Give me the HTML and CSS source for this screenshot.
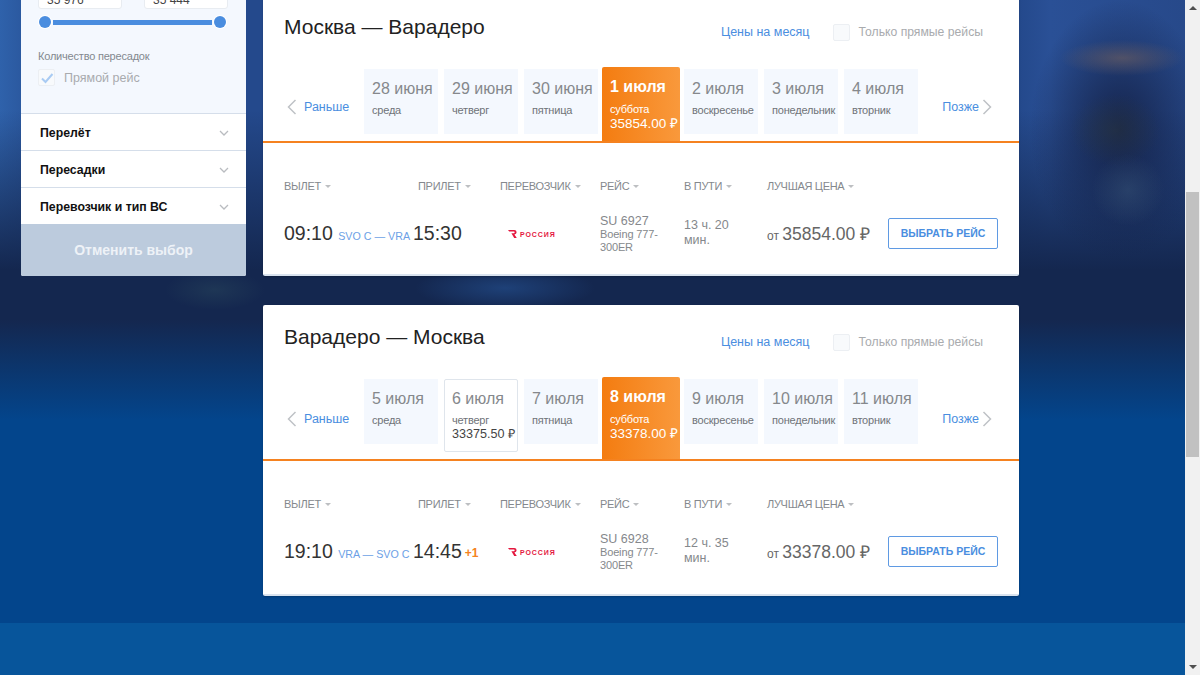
FILE: index.html
```html
<!DOCTYPE html>
<html lang="en">

<head>
    <meta charset="utf-8" />
    <title>Москва — Варадеро</title>
    <link rel="stylesheet" href="styles.css">
</head>

<body>
    <div class="page">
        <div class="content">
            <div class="layout">
                <aside class="sidebar">
                    <div class="filter">
                        <div class="range-inputs">
                            <div class="range-input">35 976</div>
                            <div class="range-input">35 444</div>
                        </div>
                        <div class="slider">
                            <span class="slider-handle"></span>
                            <span class="slider-line"></span>
                            <span class="slider-handle"></span>
                        </div>
                        <div class="filter-label">Количество пересадок</div>
                        <div class="check-row">
                            <span class="checkbox">
                                <svg width="14" height="12" viewBox="0 0 14 12"><path d="M2 6.5 L5.5 10 L12.5 2" fill="none" stroke="#a9cbf3" stroke-width="2"/></svg>
                            </span>
                            <span class="check-text">Прямой рейс</span>
                        </div>
                    </div>
                    <div class="accordion-row">Перелёт
                        <svg width="10" height="6" viewBox="0 0 10 6"><path d="M1 1 L5 5 L9 1" fill="none" stroke="#b9bcc0" stroke-width="1.3"/></svg>
                    </div>
                    <div class="accordion-row">Пересадки
                        <svg width="10" height="6" viewBox="0 0 10 6"><path d="M1 1 L5 5 L9 1" fill="none" stroke="#b9bcc0" stroke-width="1.3"/></svg>
                    </div>
                    <div class="accordion-row">Перевозчик и тип ВС
                        <svg width="10" height="6" viewBox="0 0 10 6"><path d="M1 1 L5 5 L9 1" fill="none" stroke="#b9bcc0" stroke-width="1.3"/></svg>
                    </div>
                    <div class="cancel-btn">Отменить выбор</div>
                </aside>

                <main class="results">
                    <section class="card">
                        <div class="card-head">
                            <h2 class="route-title">Москва — Варадеро</h2>
                            <a class="month-link">Цены на месяц</a>
                            <span class="checkbox"></span>
                            <span class="check-text small">Только прямые рейсы</span>
                        </div>
                        <div class="days">
                            <a class="day-nav">
                                <svg width="10" height="16" viewBox="0 0 10 16"><path d="M8.5 1 L1.5 8 L8.5 15" fill="none" stroke="#bfc2c6" stroke-width="1.5"/></svg>
                                Раньше
                            </a>
                            <div class="day"><div class="day-date">28 июня</div><div class="day-name">среда</div></div>
                            <div class="day"><div class="day-date">29 июня</div><div class="day-name">четверг</div></div>
                            <div class="day"><div class="day-date">30 июня</div><div class="day-name">пятница</div></div>
                            <div class="day active"><div class="day-date">1 июля</div><div class="day-name">суббота</div><div class="day-price">35854.00 ₽</div></div>
                            <div class="day"><div class="day-date">2 июля</div><div class="day-name">воскресенье</div></div>
                            <div class="day"><div class="day-date">3 июля</div><div class="day-name">понедельник</div></div>
                            <div class="day"><div class="day-date">4 июля</div><div class="day-name">вторник</div></div>
                            <a class="day-nav later">
                                Позже
                                <svg width="10" height="16" viewBox="0 0 10 16"><path d="M1.5 1 L8.5 8 L1.5 15" fill="none" stroke="#bfc2c6" stroke-width="1.5"/></svg>
                            </a>
                        </div>
                        <div class="table-head">
                            <span class="sort">Вылет</span>
                            <span class="sort">Прилет</span>
                            <span class="sort">Перевозчик</span>
                            <span class="sort">Рейс</span>
                            <span class="sort">В пути</span>
                            <span class="sort">Лучшая цена</span>
                        </div>
                        <div class="flight">
                            <div class="flight-time">09:10 <span class="flight-route">SVO C — VRA</span></div>
                            <div class="flight-time">15:30</div>
                            <div class="carrier">
                                <svg width="9" height="8" viewBox="0 0 9 8"><path d="M0 0 H6.2 Q8.6 0 8.6 2.2 Q8.6 4 6.4 4.4 L8.8 8 H6.2 L3.4 3.2 H6 Q6.6 3.2 6.6 2.3 Q6.6 1.5 6 1.5 H1.2 Z" fill="#e4173e"/></svg>
                                <span class="carrier-name">РОССИЯ</span>
                            </div>
                            <div class="flight-info"><div class="flight-no">SU 6927</div>Boeing 777-300ER</div>
                            <div class="flight-duration">13 ч. 20 мин.</div>
                            <div class="flight-price">от <b>35854.00 ₽</b></div>
                            <a class="select-btn">Выбрать рейс</a>
                        </div>
                    </section>

                    <section class="card">
                        <div class="card-head">
                            <h2 class="route-title">Варадеро — Москва</h2>
                            <a class="month-link">Цены на месяц</a>
                            <span class="checkbox"></span>
                            <span class="check-text small">Только прямые рейсы</span>
                        </div>
                        <div class="days">
                            <a class="day-nav">
                                <svg width="10" height="16" viewBox="0 0 10 16"><path d="M8.5 1 L1.5 8 L8.5 15" fill="none" stroke="#bfc2c6" stroke-width="1.5"/></svg>
                                Раньше
                            </a>
                            <div class="day"><div class="day-date">5 июля</div><div class="day-name">среда</div></div>
                            <div class="day priced"><div class="day-date">6 июля</div><div class="day-name">четверг</div><div class="day-price">33375.50 ₽</div></div>
                            <div class="day"><div class="day-date">7 июля</div><div class="day-name">пятница</div></div>
                            <div class="day active"><div class="day-date">8 июля</div><div class="day-name">суббота</div><div class="day-price">33378.00 ₽</div></div>
                            <div class="day"><div class="day-date">9 июля</div><div class="day-name">воскресенье</div></div>
                            <div class="day"><div class="day-date">10 июля</div><div class="day-name">понедельник</div></div>
                            <div class="day"><div class="day-date">11 июля</div><div class="day-name">вторник</div></div>
                            <a class="day-nav later">
                                Позже
                                <svg width="10" height="16" viewBox="0 0 10 16"><path d="M1.5 1 L8.5 8 L1.5 15" fill="none" stroke="#bfc2c6" stroke-width="1.5"/></svg>
                            </a>
                        </div>
                        <div class="table-head">
                            <span class="sort">Вылет</span>
                            <span class="sort">Прилет</span>
                            <span class="sort">Перевозчик</span>
                            <span class="sort">Рейс</span>
                            <span class="sort">В пути</span>
                            <span class="sort">Лучшая цена</span>
                        </div>
                        <div class="flight">
                            <div class="flight-time">19:10 <span class="flight-route">VRA — SVO C</span></div>
                            <div class="flight-time">14:45<sup class="next-day">+1</sup></div>
                            <div class="carrier">
                                <svg width="9" height="8" viewBox="0 0 9 8"><path d="M0 0 H6.2 Q8.6 0 8.6 2.2 Q8.6 4 6.4 4.4 L8.8 8 H6.2 L3.4 3.2 H6 Q6.6 3.2 6.6 2.3 Q6.6 1.5 6 1.5 H1.2 Z" fill="#e4173e"/></svg>
                                <span class="carrier-name">РОССИЯ</span>
                            </div>
                            <div class="flight-info"><div class="flight-no">SU 6928</div>Boeing 777-300ER</div>
                            <div class="flight-duration">12 ч. 35 мин.</div>
                            <div class="flight-price">от <b>33378.00 ₽</b></div>
                            <a class="select-btn">Выбрать рейс</a>
                        </div>
                    </section>
                </main>
            </div>
        </div>
        <div class="footer"></div>
    </div>

    <div class="scrollbar">
        <span class="scroll-up"></span>
        <div class="scroll-track"><div class="scroll-thumb"></div></div>
        <span class="scroll-down"></span>
    </div>
</body>

</html>
```
FILE: styles.css
```css
* {
    box-sizing: border-box;
    font-family: "Liberation Sans", Arial, sans-serif;
}

html, body {
    margin: 0;
    height: 675px;
    overflow: hidden;
}

body {
    display: flex;
}

.page {
    flex: 1;
    display: flex;
    flex-direction: column;
    height: 675px;
    overflow: hidden;
}

.content {
    height: 623px;
    background:
        radial-gradient(ellipse 62px 18px at 1122px 58px, rgba(120, 100, 96, .55), transparent),
        radial-gradient(ellipse 45px 36px at 1115px 130px, rgba(50, 62, 62, .4), transparent),
        radial-gradient(ellipse 36px 36px at 1128px 190px, rgba(62, 92, 125, .4), transparent),
        radial-gradient(ellipse 90px 22px at 505px 288px, rgba(40, 90, 160, .5), transparent),
        radial-gradient(ellipse 50px 20px at 215px 290px, rgba(60, 100, 105, .25), transparent),
        linear-gradient(to bottom, transparent 320px, #03458c 420px),
        radial-gradient(ellipse 90px 130px at 1120px 130px, #15234a, transparent),
        linear-gradient(to bottom, transparent 110px, #14274f 270px),
        linear-gradient(to right, #2f62ab 0, #24498c 60px, #24498c 1020px, #2a5096 1050px, #27498a 1185px);
}

.layout {
    display: flex;
    align-items: flex-start;
    gap: 17px;
    padding-left: 21px;
    margin-top: -20px;
}

/* left filter column */
.sidebar {
    width: 225px;
    flex: none;
    background: #fff;
    border-radius: 0 0 2px 2px;
    overflow: hidden;
}

.filter {
    height: 133px;
    padding: 0 18px 0 17px;
    background: #f4f8fe;
}

.range-inputs {
    display: flex;
    justify-content: space-between;
}

.range-input {
    width: 84px;
    height: 29px;
    padding: 13px 0 0 8px;
    font-size: 12px;
    line-height: 12px;
    color: #444;
    background: #fff;
    border: 1px solid #e8ecf1;
    border-radius: 3px;
}

.slider {
    display: flex;
    align-items: center;
    gap: 1px;
    margin: 7px 2px 0 1px;
}

.slider-handle {
    width: 12px;
    height: 12px;
    border-radius: 50%;
    background: #4a8ddf;
    box-shadow: 0 0 0 1px #fff;
}

.slider-line {
    flex: 1;
    height: 5px;
    margin: 0 1px;
    background: #4a8ddf;
}

.filter-label {
    margin-top: 21px;
    font-size: 11px;
    letter-spacing: -.2px;
    line-height: 14px;
    color: #83888f;
}

.check-row {
    display: flex;
    align-items: center;
    gap: 9px;
    margin-top: 6px;
}

.checkbox {
    display: inline-flex;
    align-items: center;
    justify-content: center;
    width: 17px;
    height: 17px;
    flex: none;
    background: #f8fafc;
    border: 1px solid #eceff3;
    border-radius: 2px;
}

.check-text {
    font-size: 12.5px;
    color: #a9abae;
}

.check-text.small {
    font-size: 12.2px;
}

.accordion-row {
    display: flex;
    align-items: center;
    justify-content: space-between;
    height: 37px;
    padding: 2px 17px 0 19px;
    font-size: 12.3px;
    font-weight: bold;
    color: #111;
    background: #fff;
    border-top: 1px solid #d5deea;
}

.cancel-btn {
    height: 52px;
    font-size: 14px;
    font-weight: bold;
    line-height: 52px;
    text-align: center;
    color: #eef2f7;
    background: #bccbdd;
}

/* right column */
.results {
    display: flex;
    flex-direction: column;
    gap: 29px;
    width: 756px;
    margin-top: 15px;
}

.card {
    background: #fff;
    border-bottom: 2px solid #d9e3ef;
    border-radius: 2px;
    box-shadow: 0 1px 2px rgba(0, 0, 0, .2);
}

.card-head {
    display: flex;
    align-items: center;
    height: 74px;
    padding: 0 36px 0 21px;
}

.route-title {
    margin: 0 auto 0 0;
    font-size: 21px;
    font-weight: normal;
    color: #222;
    position: relative;
    top: -5px;
}

.month-link {
    margin-right: 23px;
    font-size: 12.5px;
    color: #4a8ee0;
}

.card-head .checkbox {
    margin-right: 9px;
}

.days {
    display: flex;
    align-items: flex-start;
    gap: 6px;
    padding: 0 21px 7px;
    border-bottom: 2px solid #f58220;
}

.day-nav {
    display: flex;
    align-items: center;
    gap: 7px;
    width: 74px;
    height: 16px;
    margin-top: 30px;
    padding-left: 3px;
    font-size: 12.5px;
    color: #4a8ee0;
}

.card + .card .day-nav {
    margin-top: 32px;
}

.day-nav.later {
    width: auto;
    margin-left: auto;
    padding: 0 6px 0 0;
    gap: 3px;
}

.day {
    width: 74px;
    min-height: 65px;
    padding: 10px 0 10px 8px;
    background: #f4f8fe;
    white-space: nowrap;
}

.day-date {
    font-size: 16px;
    line-height: 20px;
    color: #85888c;
}

.day-name {
    margin-top: 4px;
    font-size: 11px;
    letter-spacing: -.2px;
    line-height: 14px;
    color: #6f7378;
}

.day-price {
    font-size: 12.6px;
    line-height: 15px;
    color: #444;
}

.day.priced {
    background: #fff;
    border: 1px solid #dfe5ec;
    border-radius: 2px;
    padding: 9px 0 9px 7px;
}

.day.active {
    align-self: stretch;
    width: 78px;
    margin: -2px -2px -7px;
    padding: 10px 0 0 8px;
    background: linear-gradient(to right, #f47c10, #f9993c);
    border-radius: 2px 2px 0 0;
}

.day.active .day-date {
    font-weight: bold;
    color: #fff;
}

.day.active .day-name,
.day.active .day-price {
    color: #fff;
}

.day.active .day-name {
    margin-top: 5px;
}

.day.active .day-price {
    font-size: 13.5px;
}

.table-head {
    display: grid;
    grid-template-columns: 134px 82px 100px 84px 83px auto;
    height: 16px;
    margin-top: 35px;
    padding: 0 21px;
    font-size: 11px;
    letter-spacing: -.3px;
    line-height: 16px;
    text-transform: uppercase;
    color: #84888d;
}

.sort {
    display: flex;
    align-items: center;
    gap: 4px;
}

.sort::after {
    content: "";
    border: 3.5px solid transparent;
    border-top-color: #bdbfc2;
    border-bottom: 0;
}

.flight {
    display: grid;
    grid-template-columns: 129px 87px 100px 84px 83px 121px 110px;
    align-items: center;
    height: 42px;
    margin: 18px 0 20px;
    padding: 0 21px;
}

.card + .card .flight {
    margin-bottom: 22px;
}

.flight-time {
    font-size: 19.5px;
    color: #333;
    white-space: nowrap;
}

.flight-route {
    font-size: 10.7px;
    color: #6c9fe6;
}

.next-day {
    margin-left: 3px;
    font-size: 12px;
    font-weight: bold;
    color: #f58220;
    vertical-align: 1px;
}

.carrier {
    display: flex;
    align-items: center;
    gap: 3px;
    padding: 2px 0 0 8px;
}

.carrier-name {
    font-size: 7px;
    font-weight: bold;
    letter-spacing: .9px;
    color: #e4173e;
}

.flight-info {
    padding: 2px 8px 0 0;
    font-size: 11px;
    letter-spacing: -.15px;
    line-height: 13px;
    color: #85888c;
}

.flight-no {
    font-size: 12.5px;
    letter-spacing: 0;
}

.flight-duration {
    padding-right: 12px;
    font-size: 12.5px;
    line-height: 15px;
    color: #85888c;
}

.flight-price {
    font-size: 12px;
    color: #666;
    white-space: nowrap;
}

.flight-price b {
    font-size: 17.5px;
    font-weight: normal;
}

.select-btn {
    height: 31px;
    font-size: 10.5px;
    font-weight: bold;
    line-height: 29px;
    text-align: center;
    text-transform: uppercase;
    color: #4a8ee0;
    border: 1px solid #5f9ae3;
    border-radius: 2px;
}

.footer {
    height: 52px;
    background: #07559b;
}

/* fake browser scrollbar */
.scrollbar {
    display: flex;
    flex-direction: column;
    align-items: center;
    width: 15px;
    height: 675px;
    flex: none;
    background: #f1f1f1;
}

.scroll-up,
.scroll-down {
    width: 0;
    height: 0;
    margin: 6px 0;
    border: 4px solid transparent;
}

.scroll-up {
    border-bottom-color: #505050;
    border-top: 0;
}

.scroll-down {
    border-top-color: #505050;
    border-bottom: 0;
}

.scroll-track {
    flex: 1;
    width: 100%;
    padding: 176px 1px 0;
}

.scroll-thumb {
    height: 265px;
    background: #c1c1c1;
}
```
